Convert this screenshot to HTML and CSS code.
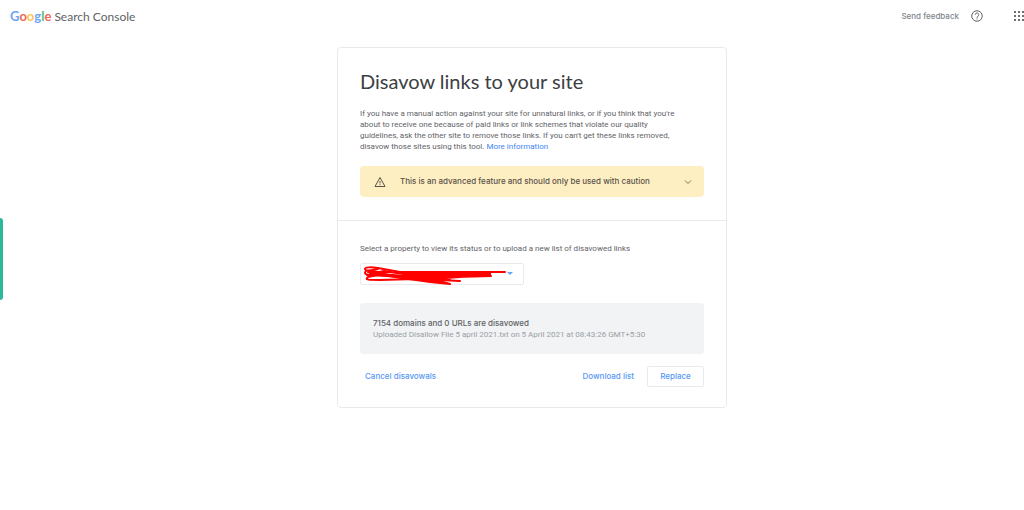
FILE: index.html
```html
<!DOCTYPE html>
<html lang="en">
<head>
	<meta charset="utf-8">
	<title>Disavow links</title>
	<link rel="stylesheet" href="styles.css">
</head>
<body>
	<header class="header">
		<div class="logo"><span class="google"><span class="blue">G</span><span class="red">o</span><span class="yellow">o</span><span class="blue">g</span><span class="green">l</span><span class="red">e</span></span> Search Console</div>
		<div class="tools">
			<button class="feedback" type="button">Send feedback</button>
			<button class="help" type="button" aria-label="Help">
				<svg width="12" height="12" viewBox="0 0 24 24">
					<circle cx="12" cy="12" r="10.5" fill="none" stroke="#5f6368" stroke-width="2"/>
					<path d="M8.500 9.500a3.500 3.500 0 1 1 5.600 2.800C12.800 13.300 12 13.800 12 15.500" fill="none" stroke="#5f6368" stroke-width="2"/>
					<rect x="11" y="17" width="2" height="2" fill="#5f6368"/>
				</svg>
			</button>
			<button type="button" aria-label="Apps">
				<svg width="10" height="10" viewBox="0 0 10 10" fill="#6c7075">
					<rect x="0" y="0" width="2" height="2"/><rect x="4" y="0" width="2" height="2"/><rect x="8" y="0" width="2" height="2"/>
					<rect x="0" y="4" width="2" height="2"/><rect x="4" y="4" width="2" height="2"/><rect x="8" y="4" width="2" height="2"/>
					<rect x="0" y="8" width="2" height="2"/><rect x="4" y="8" width="2" height="2"/><rect x="8" y="8" width="2" height="2"/>
				</svg>
			</button>
		</div>
	</header>

	<div class="side-tab"></div>

	<main class="card">
		<section class="intro">
			<h1>Disavow links to your site</h1>
			<p>If you have a manual action against your site for unnatural links, or if you think that you're about to receive one because of paid links or link schemes that violate our quality guidelines, ask the other site to remove those links. If you can't get these links removed, disavow those sites using this tool. <a href="#">More information</a></p>
			<button class="warning" type="button">
				<svg width="12" height="12" viewBox="0 0 24 24">
					<path d="M12 3L22 21H2z" fill="none" stroke="#5a524a" stroke-width="2"/>
					<path d="M12 10v5M12 16.500v2" stroke="#5a524a" stroke-width="2"/>
				</svg>
				<span class="warning-text">This is an advanced feature and should only be used with caution</span>
				<svg width="8" height="8" viewBox="0 0 8 8">
					<path d="M1 2.500l3 3 3-3" fill="none" stroke="#80735f" stroke-width="1"/>
				</svg>
			</button>
		</section>

		<section class="property">
			<label for="property">Select a property to view its status or to upload a new list of disavowed links</label>
			<div class="select-box">
				<select id="property"><option></option></select>
				<svg class="arrow" width="6" height="4" viewBox="0 0 6 4"><path d="M0 0h6L3 3z" fill="#6ba4f5"/></svg>
				<svg class="scribble" width="163" height="22" viewBox="0 0 163 22" fill="none" stroke="#ff0000" stroke-width="2" stroke-linecap="round" stroke-linejoin="round">
					<path d="M18 6C11 8 5 8 5 6S11 4 18 5L29 7 40 9H145"/>
					<path d="M6 8C2 12 10 13 22 11L8 14C4 17 9 17 20 17L56 16 80 17 100 18"/>
					<path d="M8 9L30 9 50 12 130 9 60 15 131 13 48 14 30 13 10 11 24 8 44 11 130 11"/>
					<path d="M20 10L42 15 70 19 90 21 76 17 56 17 100 14 26 13M42 14L90 17M66 18L84 20"/>
					<path d="M10 10L44 13 70 13 120 13M7 12L28 13 50 16 84 15M98 10H130V12H90"/>
				</svg>
			</div>

			<div class="status">
				<strong>7154 domains and 0 URLs are disavowed</strong>
				<span>Uploaded Disallow File 5 april 2021.txt on 5 April 2021 at 08:43:26 GMT+5:30</span>
			</div>

			<div class="actions">
				<button type="button">Cancel disavowals</button>
				<button class="download" type="button">Download list</button>
				<button class="replace" type="button">Replace</button>
			</div>
		</section>
	</main>
</body>
</html>
```
FILE: styles.css
```css
body{
	margin: 0;
	background: #fff;
	font-family: Roboto, sans-serif;
	font-size: 8px;
	line-height: 11px;
	color: #5f6368;
}
button{
	margin: 0;
	padding: 0;
	border: 0;
	background: none;
	font: inherit;
	color: inherit;
}
svg{
	display: block;
}

/* header */
.header{
	display: flex;
	justify-content: space-between;
	align-items: center;
	height: 32px;
	padding-left: 10px;
}
.logo{
	font-family: Lato, sans-serif;
	font-size: 12px;
	line-height: 14px;
}
.google{
	font-size: 13px;
	font-weight: bold;
}
.blue{
	color: #6fa5f8;
}
.red{
	color: #f0655a;
}
.yellow{
	color: #fbc74a;
}
.green{
	color: #5dba76;
}
.tools{
	display: flex;
	align-items: center;
}
.feedback{
	font-family: Inter, sans-serif;
	font-weight: 500;
	color: #80858b;
}
.help{
	margin: 0 31px 0 12px;
}

/* green tab on the left edge */
.side-tab{
	position: absolute;
	left: 0;
	top: 218px;
	width: 3px;
	height: 82px;
	border-radius: 0 3px 3px 0;
	background: #2cb89c;
}

/* card */
.card{
	box-sizing: border-box;
	width: 390px;
	max-width: 100%;
	margin: 15px 0 0 calc(50% - 175px);
	border: 1px solid #e8eaed;
	border-radius: 4px;
}
.intro{
	padding: 19px 22px 23px;
	border-bottom: 1px solid #e8eaed;
}
h1{
	margin: 0 0 13px;
	font-family: Lato, sans-serif;
	font-size: 20px;
	font-weight: normal;
	line-height: 28px;
	color: #3c4043;
}
p{
	margin: 0 0 14px;
	padding-right: 20px;
}
a{
	color: #4285f4;
	text-decoration: none;
}
.warning{
	display: flex;
	align-items: center;
	width: 100%;
	height: 31px;
	padding: 0 12px 0 14px;
	border-radius: 4px;
	background: #feefc3;
	font-family: Inter, sans-serif;
	font-weight: 500;
	color: #5a524a;
}
.warning-text{
	flex: 1;
	margin-left: 14px;
	text-align: left;
}
.property{
	padding: 22px 22px 20px;
}
.property label{
	display: block;
	margin-bottom: 9px;
}
.select-box{
	position: relative;
	width: 164px;
	margin-bottom: 18px;
}
.select-box select{
	display: block;
	appearance: none;
	width: 100%;
	height: 22px;
	border: 1px solid #e8eaed;
	border-radius: 2px;
	background: #fff;
}
.arrow{
	position: absolute;
	right: 11px;
	top: 9px;
}
.scribble{
	position: absolute;
	left: 0;
	top: 0;
	pointer-events: none;
}
.status{
	padding: 14px 13px 13px;
	border-radius: 3px;
	background: #f1f3f4;
	line-height: 12px;
	color: #9aa0a6;
}
.status strong,
.status span{
	display: block;
}
.status strong{
	font-family: Inter, sans-serif;
	font-weight: 500;
	color: #5f6368;
}
.actions{
	display: flex;
	align-items: center;
	margin-top: 12px;
	padding-left: 5px;
	font-family: Inter, sans-serif;
	font-weight: 500;
	color: #5798f5;
}
.download{
	margin-left: auto;
}
.replace{
	width: 57px;
	height: 21px;
	margin-left: 13px;
	border: 1px solid #e8eaed;
	border-radius: 2px;
}
```
